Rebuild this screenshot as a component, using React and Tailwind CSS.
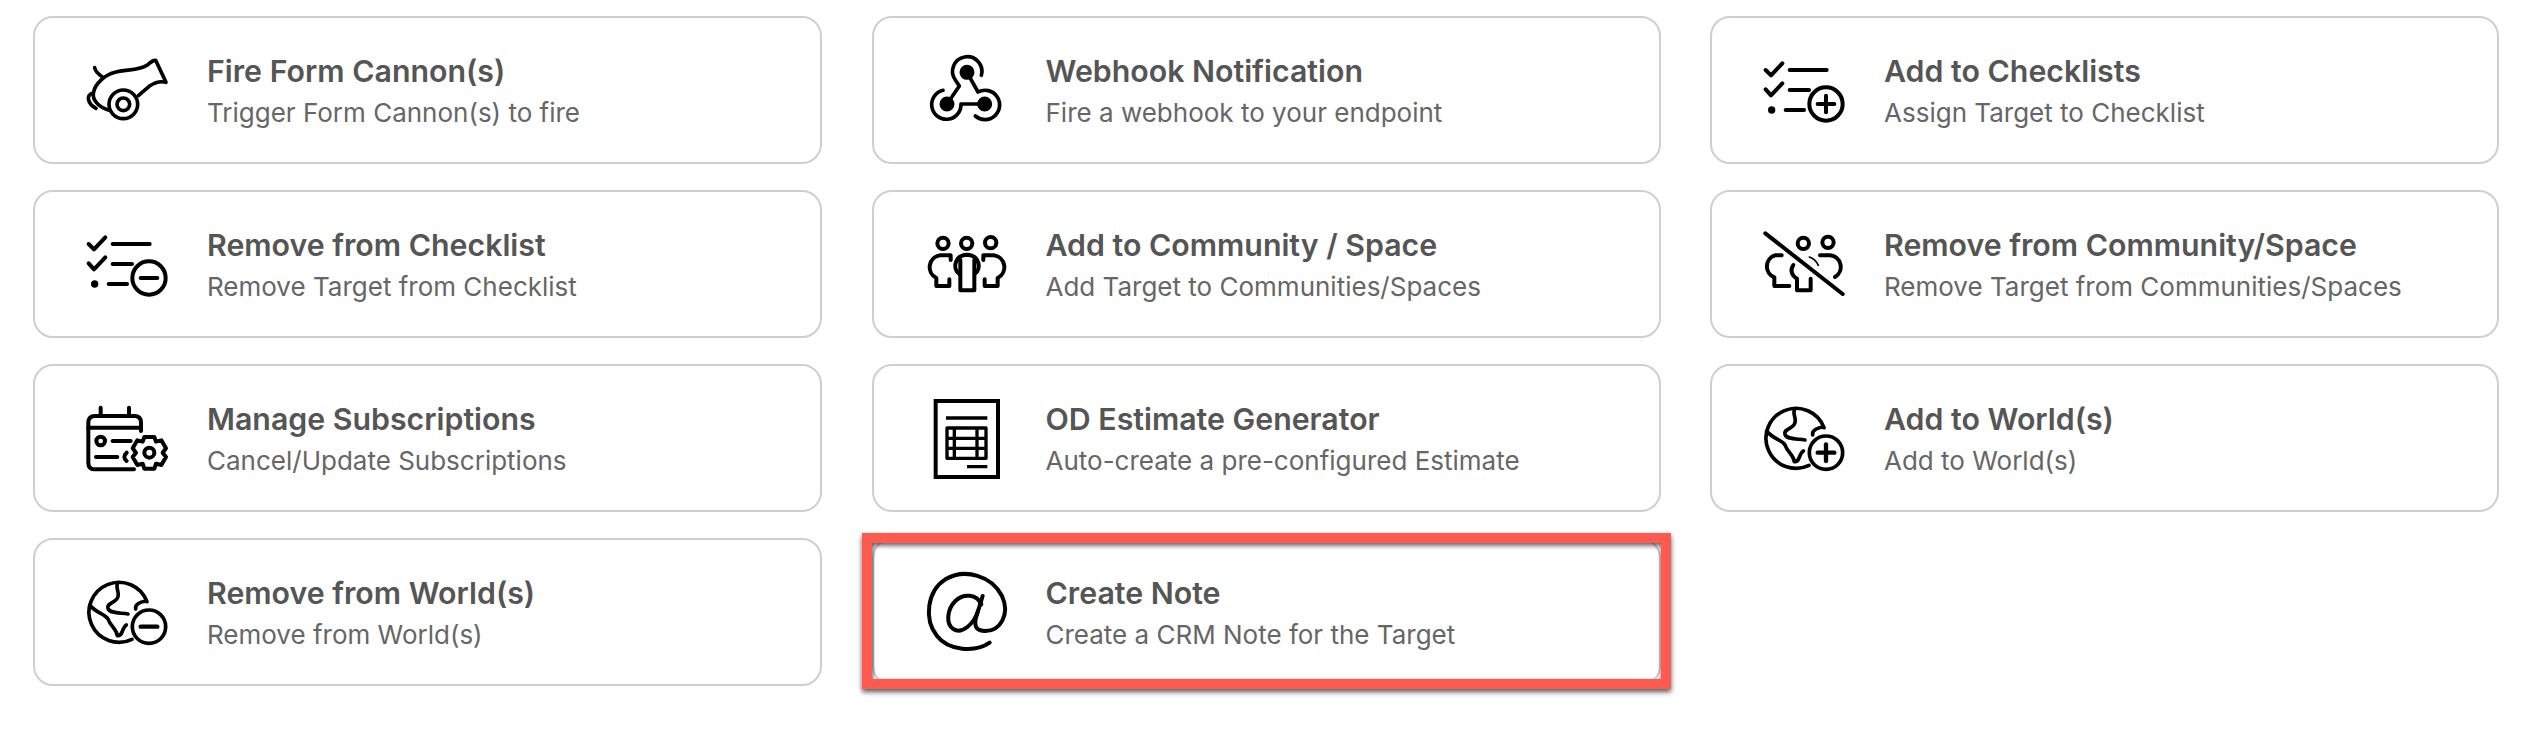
const stroke = {
  fill: 'none',
  stroke: '#000',
  strokeLinecap: 'round',
  strokeLinejoin: 'round',
};

function Icon({ viewBox, width = 11, children }) {
  return (
    <svg width="100" height="100" viewBox={viewBox} className="shrink-0" {...stroke} strokeWidth={width} aria-hidden="true">
      {children}
    </svg>
  );
}

const Cannon = () => (
  <Icon viewBox="39 30 300 300">
    <path d="M104 113C105 125 118 135 130 143" />
    <path d="M145 240C112 230 98 208 100 190C104 160 135 135 165 127C195 118 240 122 262 105C270 98 278 90 287 91L318 157C300 152 285 157 270 167L235 197" />
    <path d="M97 190C78 194 82 222 108 235" />
    <circle cx="190" cy="223" r="43" />
    <circle cx="190" cy="223" r="19" />
  </Icon>
);

const Webhook = () => (
  <Icon viewBox="30 30 300 300">
    <path d="M238 136A44 44 0 1 0 160 150L172 168L135 222" />
    <path d="M123 181A44 44 0 1 0 177 222H248" />
    <path d="M195 127L228 186A44 44 0 1 1 220 258" />
    <circle cx="195" cy="127" r="17" fill="#000" />
    <circle cx="135" cy="222" r="17" fill="#000" />
    <circle cx="248" cy="222" r="17" fill="#000" />
  </Icon>
);

const Checklist = ({ plus }) => (
  <Icon viewBox="30 30 300 300" width={12}>
    <path d="M77 120L93 136L127 100" />
    <path d="M149 120H260" />
    <path d="M77 178L93 196L127 160" />
    <path d="M149 180H207" />
    <circle cx="95" cy="240" r="11" fill="#000" stroke="none" />
    <path d="M137 240H192" />
    <circle cx="258" cy="222" r="50" />
    <path d="M233 222H283" />
    {plus && <path d="M258 197V247" />}
  </Icon>
);

const Community = () => (
  <Icon viewBox="30 12 300 300" width={12}>
    <circle cx="123" cy="100" r="17" />
    <circle cx="194" cy="100" r="17" />
    <circle cx="266" cy="98" r="17" />
    <path d="M146 150V136H115A36 36 0 0 0 103 204V228H142V208" />
    <path d="M244 150V136H275A36 36 0 0 1 287 204V228H248V208" />
    <path d="M172 192C150 176 158 136 195 134C232 136 240 176 218 192" />
    <path d="M175 150V241H217V150" />
  </Icon>
);

const CommunityOff = () => (
  <Icon viewBox="30 12 300 300" width={12}>
    <circle cx="190" cy="100" r="17" />
    <circle cx="264" cy="97" r="17" />
    <path d="M125 136H105A35 35 0 0 0 103 202V228H148" />
    <path d="M160 165C150 180 154 196 171 206V241H212V206" />
    <path d="M208 141C220 145 230 155 235 166" strokeWidth="5" />
    <path d="M240 136H270A35 35 0 0 1 285 201" />
    <path d="M76 70L308 252" />
  </Icon>
);

const Subscriptions = () => (
  <Icon viewBox="39 21 300 300" width={12}>
    <path d="M122 80V105M207 80V105" />
    <path d="M243 150V125Q243 105 223 105H105Q85 105 85 125V245Q85 265 105 265H222" />
    <path d="M85 140H243" />
    <circle cx="122" cy="180" r="13" />
    <path d="M158 180H212M108 228H172" />
    <path d="M200 215Q186 228 200 240" />
    <path d="M253 168H283L288 182L304 178L318 202L308 215L318 228L304 252L288 248L283 263H253L248 248L232 252L218 228L228 215L218 202L232 178L248 182Z" />
    <circle cx="268" cy="215" r="15" />
  </Icon>
);

const Estimate = () => (
  <Icon viewBox="30 6 300 300" width={10}>
    <g strokeLinecap="butt" strokeLinejoin="miter">
      <rect x="101" y="45" width="187" height="228" strokeWidth="12" />
      <path d="M132 96H256M195 242H256" />
      <rect x="135" y="126" width="117" height="91" strokeLinejoin="round" />
      <path d="M157 126V217M225 126V217M135 157H252M135 187H252" />
    </g>
  </Icon>
);

const World = ({ plus }) => (
  <Icon viewBox="30 51 300 300" width={11}>
    <path d="M207 283A90 90 0 1 1 252 170" />
    <path d="M165 113C155 125 170 140 165 155C160 175 130 172 135 190C140 206 170 203 195 207" />
    <path d="M80 180C100 205 125 205 135 222C143 245 160 250 163 272C180 275 175 250 190 240" />
    <path d="M218 192C215 176 235 170 250 168" />
    <circle cx="258" cy="245" r="50" />
    <path d="M233 245H283" strokeWidth="13" />
    {plus && <path d="M258 220V270" strokeWidth="13" />}
  </Icon>
);

const AtSign = () => (
  <Icon viewBox="180 123 300 300" width={12}>
    <path d="M413 365C370 395 290 390 255 345C215 295 225 210 280 175C340 140 420 165 450 225C475 280 445 330 400 330C375 330 365 320 372 290L392 225" />
    <path d="M388 250C375 220 335 215 310 240C285 265 280 310 305 325C330 340 365 310 378 270" />
  </Icon>
);

const actions = [
  { title: 'Fire Form Cannon(s)', text: 'Trigger Form Cannon(s) to fire', icon: <Cannon /> },
  { title: 'Webhook Notification', text: 'Fire a webhook to your endpoint', icon: <Webhook /> },
  { title: 'Add to Checklists', text: 'Assign Target to Checklist', icon: <Checklist plus /> },
  { title: 'Remove from Checklist', text: 'Remove Target from Checklist', icon: <Checklist /> },
  { title: 'Add to Community / Space', text: 'Add Target to Communities/Spaces', icon: <Community /> },
  { title: 'Remove from Community/Space', text: 'Remove Target from Communities/Spaces', icon: <CommunityOff /> },
  { title: 'Manage Subscriptions', text: 'Cancel/Update Subscriptions', icon: <Subscriptions /> },
  { title: 'OD Estimate Generator', text: 'Auto-create a pre-configured Estimate', icon: <Estimate /> },
  { title: 'Add to World(s)', text: 'Add to World(s)', icon: <World plus /> },
  { title: 'Remove from World(s)', text: 'Remove from World(s)', icon: <World /> },
  { title: 'Create Note', text: 'Create a CRM Note for the Target', icon: <AtSign />, highlight: true },
];

function ActionCard({ title, text, icon, highlight }) {
  return (
    <div className="relative flex h-[148px] items-center gap-[34px] rounded-[20px] border-2 border-[#cfcfcf] bg-white pl-[38px]">
      {icon}
      <div className="flex flex-col pt-[3px]">
        <span className="text-[30.3px] leading-[42px] font-semibold text-[#555]">{title}</span>
        <span className="text-[26px] leading-[42px] text-[#666]">{text}</span>
      </div>
      {highlight && (
        <div className="absolute -top-[7px] -right-[12px] -bottom-[5px] -left-[12px] border-[10px] border-[#ff5a4f] shadow-[0_3px_5px_rgba(0,0,0,0.65),inset_0_3px_4px_rgba(0,0,0,0.55),inset_2px_0_2px_rgba(0,0,0,0.2)]" />
      )}
    </div>
  );
}

export default function App() {
  return (
    <div className="h-[732px] w-[2522px] overflow-hidden bg-white pt-[16px] pl-[33px] font-['Inter',sans-serif]">
      <div className="grid w-[2466px] grid-cols-3 gap-x-[49.5px] gap-y-[26px]">
        {actions.map((action) => (
          <ActionCard key={action.title} {...action} />
        ))}
      </div>
    </div>
  );
}
